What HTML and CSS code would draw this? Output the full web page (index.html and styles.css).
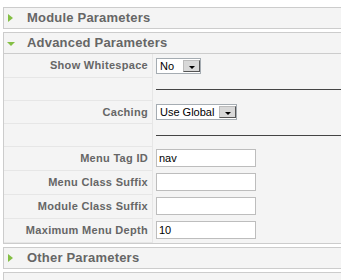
FILE: index.html
```html
<!DOCTYPE html>
<html lang="en">
<head>
    <meta charset="UTF-8">
    <title>Module Parameters</title>
    <link rel="stylesheet" href="styles.css">
</head>
<body>
    <div class="pane-sliders">
        <!-- Module Parameters (closed) -->
        <div class="panel">
            <h3 class="title"><span class="arrow-right"></span>Module Parameters</h3>
        </div>

        <!-- Advanced Parameters (open) -->
        <div class="panel">
            <h3 class="title open"><span class="arrow-down"></span>Advanced Parameters</h3>
            <div class="content">
                <table class="paramlist">
                    <tr>
                        <td class="key">Show Whitespace</td>
                        <td class="value">
                            <span class="select"><span class="select-text">No</span><span class="select-btn"><i></i></span></span>
                        </td>
                    </tr>
                    <tr>
                        <td class="key"></td>
                        <td class="value"><div class="spacer"></div></td>
                    </tr>
                    <tr>
                        <td class="key">Caching</td>
                        <td class="value">
                            <span class="select wide"><span class="select-text">Use Global</span><span class="select-btn"><i></i></span></span>
                        </td>
                    </tr>
                    <tr>
                        <td class="key"></td>
                        <td class="value"><div class="spacer"></div></td>
                    </tr>
                    <tr class="tall">
                        <td class="key">Menu Tag ID</td>
                        <td class="value"><input type="text" class="text" value="nav"></td>
                    </tr>
                    <tr class="tall">
                        <td class="key">Menu Class Suffix</td>
                        <td class="value"><input type="text" class="text" value=""></td>
                    </tr>
                    <tr class="tall">
                        <td class="key">Module Class Suffix</td>
                        <td class="value"><input type="text" class="text" value=""></td>
                    </tr>
                    <tr class="tall">
                        <td class="key">Maximum Menu Depth</td>
                        <td class="value"><input type="text" class="text" value="10"></td>
                    </tr>
                </table>
            </div>
        </div>

        <!-- Other Parameters (closed) -->
        <div class="panel">
            <h3 class="title"><span class="arrow-right"></span>Other Parameters</h3>
        </div>

        <div class="panel">
            <h3 class="title"></h3>
        </div>
    </div>
</body>
</html>
```

FILE: styles.css
```css
html {
    overflow: hidden;
}

body {
    margin: 0;
    padding: 7px 0 0 3px;
    background-color: #ffffff;
    font-family: "Liberation Sans", Arial, sans-serif;
    font-size: 11px;
    color: #666;
}

/* Sliders */
.pane-sliders {
    width: 360px;
}

.panel {
    border: 1px solid #ccc;
    margin-bottom: 3px;
    background-color: #f4f4f4;
}

.panel .title {
    margin: 0;
    height: 20px;
    line-height: 20px;
    padding-left: 23px;
    position: relative;
    font-size: 13px;
    font-weight: bold;
    letter-spacing: 0.2px;
    color: #666;
}

.panel .title.open {
    border-bottom: 1px solid #ccc;
}

.arrow-right {
    position: absolute;
    left: 4px;
    top: 6px;
    width: 0;
    height: 0;
    border-left: 5px solid #84bf45;
    border-top: 4px solid transparent;
    border-bottom: 4px solid transparent;
}

.arrow-down {
    position: absolute;
    left: 3px;
    top: 9px;
    width: 0;
    height: 0;
    border-top: 4px solid #84bf45;
    border-left: 4px solid transparent;
    border-right: 4px solid transparent;
}

.content {
    background-color: #f4f4f4;
}

/* Param table */
.paramlist {
    width: 100%;
    border-collapse: collapse;
}

.paramlist tr {
    height: 23px;
}

.paramlist tr.tall {
    height: 24px;
}

.paramlist td {
    padding: 0;
}

.paramlist .key {
    width: 144px;
    padding-right: 4px;
    text-align: right;
    font-weight: bold;
    letter-spacing: 0.3px;
    color: #666;
    border-bottom: 1px solid #e6e6e6;
    border-right: 1px solid #e6e6e6;
}

.paramlist .value {
    padding-left: 3px;
}

.spacer {
    border-top: 1px solid #444;
    margin-top: 1px;
}

/* Fake select box */
.select {
    display: inline-flex;
    align-items: center;
    justify-content: space-between;
    width: 43px;
    height: 14px;
    border: 1px solid #a5acb2;
    background-color: #fff;
    vertical-align: middle;
}

.select.wide {
    width: 79px;
}

.select-text {
    padding-left: 3px;
    color: #000;
    font-size: 11px;
    line-height: 14px;
}

.select-btn {
    width: 15px;
    height: 10px;
    border: 1px solid #555;
    border-top-color: #bbb;
    border-left-color: #bbb;
    background-color: #d8d8d8;
    position: relative;
}

.select-btn i {
    position: absolute;
    left: 5px;
    top: 5px;
    width: 0;
    height: 0;
    border-top: 3px solid #000;
    border-left: 3px solid transparent;
    border-right: 3px solid transparent;
}

/* Text inputs */
.text {
    box-sizing: border-box;
    width: 100px;
    height: 18px;
    margin: 0;
    padding: 0 2px;
    border: 1px solid #bdbdbd;
    background-color: #fff;
    font-family: "Liberation Sans", Arial, sans-serif;
    font-size: 11px;
    color: #000;
    vertical-align: middle;
}
```
